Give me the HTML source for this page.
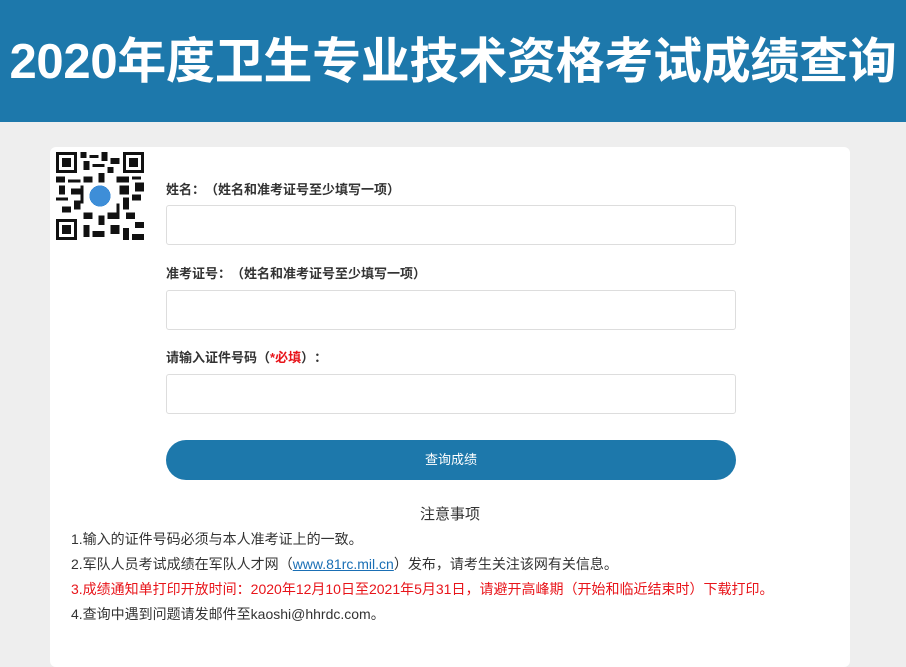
<!DOCTYPE html>
<html><head><meta charset="utf-8"><style>
body{margin:0;width:906px;height:640px;overflow:hidden;background:#eeeeee;font-family:"Liberation Sans","Noto Sans CJK SC",sans-serif;}
.hd{height:122px;background:#1d78ab;color:#fff;font-weight:bold;font-size:49px;text-align:center;line-height:124px;letter-spacing:-0.3px;white-space:nowrap;}
.card{position:absolute;left:50px;top:147px;width:800px;height:520px;background:#fff;border-radius:6px;}
.qr{position:absolute;left:6px;top:5px;width:88px;height:88px;}
.lb{position:absolute;left:116px;font-size:13px;font-weight:bold;color:#333;}
.p{display:inline-block;width:13px;text-align:center}
.in{position:absolute;left:116px;width:568px;height:38px;border:1px solid #ddd;border-radius:3px;}
.btn{position:absolute;left:116px;top:293px;width:570px;height:40px;border-radius:20px;background:#1d78ab;color:#fff;font-size:13px;text-align:center;line-height:40px;}
.t{position:absolute;left:0;width:800px;text-align:center;top:356px;font-size:15px;color:#333;}
.l{position:absolute;left:21px;font-size:14px;color:#333;white-space:nowrap;}
.r{color:#e8141a}
a{color:#1a6fb5;text-decoration:underline;}
</style></head><body>
<div class="hd">2020年度卫生专业技术资格考试成绩查询</div>
<div class="card">
<svg class="qr" viewBox="0 0 29 29" shape-rendering="crispEdges">
<rect width="29" height="29" fill="#fff"/>
<g fill="#111">
<rect x="0" y="0" width="7" height="7"/><rect x="22" y="0" width="7" height="7"/><rect x="0" y="22" width="7" height="7"/>
</g>
<g fill="#fff"><rect x="1" y="1" width="5" height="5"/><rect x="23" y="1" width="5" height="5"/><rect x="1" y="23" width="5" height="5"/></g>
<g fill="#111"><rect x="2" y="2" width="3" height="3"/><rect x="24" y="2" width="3" height="3"/><rect x="2" y="24" width="3" height="3"/>
<path d="M8 0h2v2h-2zM11 1h3v1h-3zM15 0h2v3h-2zM18 2h3v2h-3zM9 3h2v3h-2zM12 4h4v1h-4zM17 5h2v2h-2zM0 8h3v2h-3zM4 9h4v1h-4zM9 8h3v2h-3zM14 7h2v3h-2zM20 8h4v2h-4zM25 8h3v1h-3zM1 11h2v3h-2zM5 12h3v2h-3zM21 11h3v3h-3zM26 10h3v3h-3zM0 15h4v1h-4zM6 16h2v3h-2zM22 15h2v4h-2zM25 14h3v2h-3zM2 18h3v2h-3zM9 20h3v2h-3zM14 21h2v3h-2zM17 20h4v2h-4zM23 20h3v2h-3zM26 23h3v2h-3zM9 24h2v4h-2zM12 26h4v2h-4zM18 24h3v3h-3zM22 25h2v4h-2zM25 27h4v2h-4zM8 11h1v6h-1zM20 17h1v3h-1z"/></g>
<circle cx="14.5" cy="14.5" r="4.5" fill="#fff"/><circle cx="14.5" cy="14.5" r="3.5" fill="#3e8ed8"/>
</svg>
<div class="lb" style="top:32px">姓名<span class="p">：</span><span class="p">（</span>姓名和准考证号至少填写一项<span class="p">）</span></div>
<div class="in" style="top:58px"></div>
<div class="lb" style="top:116px">准考证号<span class="p">：</span><span class="p">（</span>姓名和准考证号至少填写一项<span class="p">）</span></div>
<div class="in" style="top:143px"></div>
<div class="lb" style="top:200px">请输入证件号码<span class="p">（</span><span class="r">*必填</span><span class="p">）</span><span class="p">：</span></div>
<div class="in" style="top:227px"></div>
<div class="btn">查询成绩</div>
<div class="t">注意事项</div>
<div class="l" style="top:382px">1.输入的证件号码必须与本人准考证上的一致。</div>
<div class="l" style="top:407px">2.军队人员考试成绩在军队人才网<span class="p" style="width:14px">（</span><a>www.81rc.mil.cn</a><span class="p" style="width:14px">）</span>发布<span class="p" style="width:14px">，</span>请考生关注该网有关信息。</div>
<div class="l r" style="top:432px">3.成绩通知单打印开放时间：2020年12月10日至2021年5月31日，请避开高峰期（开始和临近结束时）下载打印。</div>
<div class="l" style="top:457px">4.查询中遇到问题请发邮件至kaoshi@hhrdc.com。</div>
</div>
</body></html>
